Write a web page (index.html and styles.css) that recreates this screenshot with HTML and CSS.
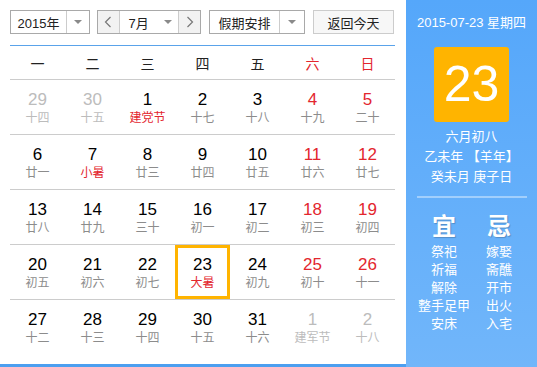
FILE: index.html
```html
<!DOCTYPE html>
<html>
<head>
  <title>万年历</title>
  <link rel="stylesheet" href="styles.css">
</head>
<body>
  <div class="calendar">
    <div class="main">
      <div class="toolbar">
        <div class="select year-select">
          <span class="select-text">2015年</span>
          <span class="select-arrow"><i class="caret"></i></span>
        </div>
        <div class="month-group">
          <span class="nav-btn">
            <svg width="8" height="12" viewBox="0 0 8 12"><polyline points="6.5,1 1.5,6 6.5,11" fill="none" stroke="#777" stroke-width="1.2"/></svg>
          </span>
          <span class="month-text">7月</span>
          <span class="month-arrow"><i class="caret"></i></span>
          <span class="nav-btn next">
            <svg width="8" height="12" viewBox="0 0 8 12"><polyline points="1.5,1 6.5,6 1.5,11" fill="none" stroke="#777" stroke-width="1.2"/></svg>
          </span>
        </div>
        <div class="select holiday-select">
          <span class="select-text">假期安排</span>
          <span class="select-arrow"><i class="caret"></i></span>
        </div>
        <button type="button" class="today-btn">返回今天</button>
      </div>

      <div class="weekdays">
        <span>一</span><span>二</span><span>三</span><span>四</span><span>五</span>
        <span class="red">六</span><span class="red">日</span>
      </div>

      <div class="days">
        <div class="week">
          <div class="day other"><span class="num">29</span><span class="lunar">十四</span></div>
          <div class="day other"><span class="num">30</span><span class="lunar">十五</span></div>
          <div class="day festival"><span class="num">1</span><span class="lunar">建党节</span></div>
          <div class="day"><span class="num">2</span><span class="lunar">十七</span></div>
          <div class="day"><span class="num">3</span><span class="lunar">十八</span></div>
          <div class="day weekend"><span class="num">4</span><span class="lunar">十九</span></div>
          <div class="day weekend"><span class="num">5</span><span class="lunar">二十</span></div>
        </div>
        <div class="week">
          <div class="day"><span class="num">6</span><span class="lunar">廿一</span></div>
          <div class="day festival"><span class="num">7</span><span class="lunar">小暑</span></div>
          <div class="day"><span class="num">8</span><span class="lunar">廿三</span></div>
          <div class="day"><span class="num">9</span><span class="lunar">廿四</span></div>
          <div class="day"><span class="num">10</span><span class="lunar">廿五</span></div>
          <div class="day weekend"><span class="num">11</span><span class="lunar">廿六</span></div>
          <div class="day weekend"><span class="num">12</span><span class="lunar">廿七</span></div>
        </div>
        <div class="week">
          <div class="day"><span class="num">13</span><span class="lunar">廿八</span></div>
          <div class="day"><span class="num">14</span><span class="lunar">廿九</span></div>
          <div class="day"><span class="num">15</span><span class="lunar">三十</span></div>
          <div class="day"><span class="num">16</span><span class="lunar">初一</span></div>
          <div class="day"><span class="num">17</span><span class="lunar">初二</span></div>
          <div class="day weekend"><span class="num">18</span><span class="lunar">初三</span></div>
          <div class="day weekend"><span class="num">19</span><span class="lunar">初四</span></div>
        </div>
        <div class="week">
          <div class="day"><span class="num">20</span><span class="lunar">初五</span></div>
          <div class="day"><span class="num">21</span><span class="lunar">初六</span></div>
          <div class="day"><span class="num">22</span><span class="lunar">初七</span></div>
          <div class="day festival today"><span class="num">23</span><span class="lunar">大暑</span></div>
          <div class="day"><span class="num">24</span><span class="lunar">初九</span></div>
          <div class="day weekend"><span class="num">25</span><span class="lunar">初十</span></div>
          <div class="day weekend"><span class="num">26</span><span class="lunar">十一</span></div>
        </div>
        <div class="week last">
          <div class="day"><span class="num">27</span><span class="lunar">十二</span></div>
          <div class="day"><span class="num">28</span><span class="lunar">十三</span></div>
          <div class="day"><span class="num">29</span><span class="lunar">十四</span></div>
          <div class="day"><span class="num">30</span><span class="lunar">十五</span></div>
          <div class="day"><span class="num">31</span><span class="lunar">十六</span></div>
          <div class="day other"><span class="num">1</span><span class="lunar">建军节</span></div>
          <div class="day other"><span class="num">2</span><span class="lunar">十八</span></div>
        </div>
      </div>
    </div>

    <div class="side">
      <div class="side-date">2015-07-23 星期四</div>
      <div class="big-day">23</div>
      <div class="lunar-info">
        <div>六月初八</div>
        <div>乙未年 【羊年】</div>
        <div>癸未月 庚子日</div>
      </div>
      <div class="divider"></div>
      <div class="almanac">
        <div class="almanac-col">
          <div class="almanac-title">宜</div>
          <div>祭祀</div>
          <div>祈福</div>
          <div>解除</div>
          <div>整手足甲</div>
          <div>安床</div>
        </div>
        <div class="almanac-col">
          <div class="almanac-title">忌</div>
          <div>嫁娶</div>
          <div>斋醮</div>
          <div>开市</div>
          <div>出火</div>
          <div>入宅</div>
        </div>
      </div>
    </div>
  </div>
</body>
</html>
```

FILE: styles.css
```css
body {
  margin: 0;
  font-family: "Liberation Sans", "Noto Sans CJK SC", sans-serif;
  background: #fff;
}

.calendar {
  display: flex;
  width: 537px;
  height: 367px;
}

.main {
  width: 406px;
  height: 367px;
  box-sizing: border-box;
  padding: 10px 11px 0 10px;
  border-bottom: 3px solid #4c9ff0;
}

/* toolbar */

.toolbar {
  display: flex;
  height: 24px;
  font-size: 13px;
  color: #222;
}

.select,
.month-group {
  display: flex;
  box-sizing: border-box;
  height: 24px;
  border: 1px solid #a9a9a9;
  background: #fff;
}

.year-select {
  width: 80px;
}

.year-select .select-text {
  width: 55px;
}

.holiday-select {
  width: 96px;
  margin-left: 8px;
}

.holiday-select .select-text {
  width: 69px;
}

.select-text {
  display: flex;
  align-items: center;
  justify-content: center;
}

.select-arrow {
  flex: 1;
  display: flex;
  align-items: center;
  justify-content: center;
  border-left: 1px solid #ccc;
}

.caret {
  width: 0;
  height: 0;
  border-left: 4px solid transparent;
  border-right: 4px solid transparent;
  border-top: 4px solid #8a8a8a;
}

.month-group {
  width: 104px;
  margin-left: 7px;
}

.nav-btn {
  width: 21px;
  display: flex;
  align-items: center;
  justify-content: center;
  background: #f2f2f2;
  border-right: 1px solid #ccc;
}

.nav-btn.next {
  border-right: none;
  border-left: 1px solid #ccc;
}

.month-text {
  width: 38px;
  display: flex;
  align-items: center;
  justify-content: center;
}

.month-arrow {
  width: 21px;
  display: flex;
  align-items: center;
  justify-content: center;
}

.today-btn {
  width: 81px;
  height: 24px;
  margin-left: 8px;
  padding: 0;
  font-family: inherit;
  font-size: 13px;
  color: #222;
  background: #f7f7f7;
  border: 1px solid #ccc;
}

/* grid */

.weekdays {
  display: grid;
  grid-template-columns: repeat(7, 55px);
  height: 33px;
  margin-top: 11px;
  border-top: 1px solid #5aa3ea;
  border-bottom: 1px solid #ccc;
  font-size: 14px;
  color: #222;
}

.weekdays span {
  display: flex;
  align-items: center;
  justify-content: center;
}

.weekdays .red {
  color: #e3262e;
}

.week {
  display: grid;
  grid-template-columns: repeat(7, 55px);
  height: 54px;
  border-bottom: 1px solid #ccc;
}

.week.last {
  border-bottom: none;
}

.day {
  display: flex;
  flex-direction: column;
  align-items: center;
  box-sizing: border-box;
  padding-top: 10px;
}

.num {
  font-size: 17px;
  line-height: 20px;
  color: #000;
}

.lunar {
  font-size: 12px;
  line-height: 17px;
  color: #8c8c8c;
}

.day.weekend .num {
  color: #e3262e;
}

.day.festival .lunar {
  color: #e3262e;
}

.day.other .num,
.day.other .lunar {
  color: #bcbcbc;
}

.day.today {
  border: 3px solid #ffb400;
  padding-top: 7px;
  height: 54px;
}

/* side panel */

.side {
  width: 131px;
  height: 367px;
  padding-top: 13px;
  box-sizing: border-box;
  background: linear-gradient(#55a7fa, #71b6fa);
  color: #fff;
  text-align: center;
}

.side-date {
  font-size: 13px;
  line-height: 20px;
}

.big-day {
  width: 75px;
  height: 75px;
  margin: 14px auto 0;
  border-radius: 3px;
  background: #ffb400;
  font-size: 50px;
  line-height: 75px;
}

.lunar-info {
  margin-top: 5px;
  font-size: 13px;
  line-height: 20px;
}

.divider {
  width: 110px;
  height: 2px;
  margin: 9px auto 0;
  background: rgba(255, 255, 255, 0.4);
}

.almanac {
  display: flex;
  justify-content: center;
  margin-top: 14px;
  font-size: 13px;
  line-height: 18px;
}

.almanac-col {
  width: 55px;
}

.almanac-title {
  font-size: 24px;
  line-height: 30px;
  font-weight: bold;
  text-shadow: 1px 1px 1px rgba(0, 0, 0, 0.2);
  margin-bottom: 1px;
}
```
